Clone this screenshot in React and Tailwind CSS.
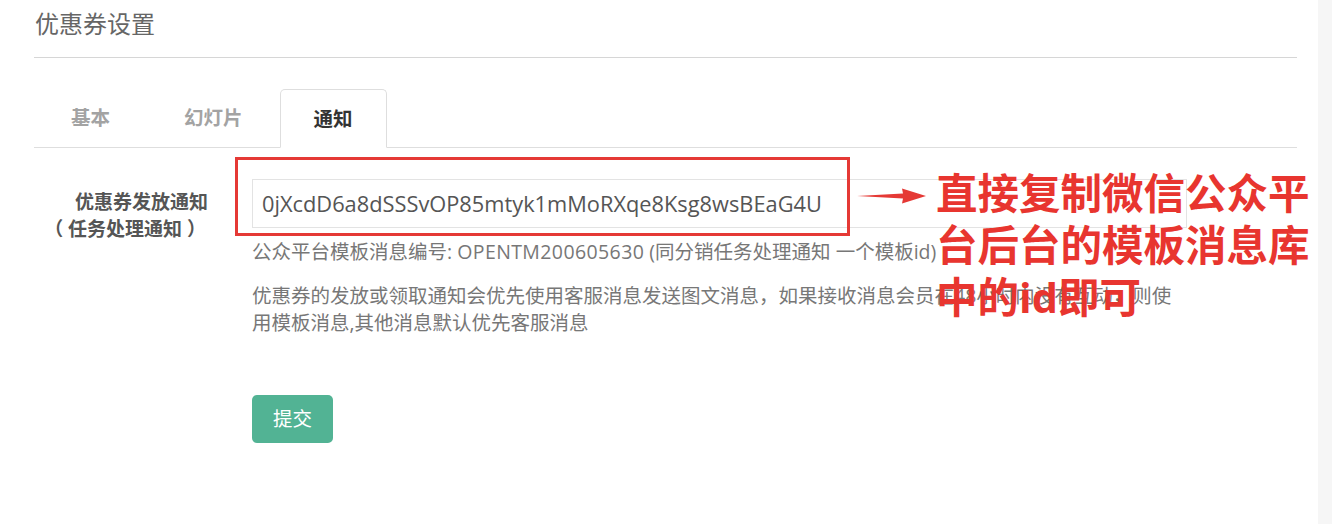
import React from "react";

const font = { fontFamily: '"Open Sans", "Noto Sans CJK SC", sans-serif' };

const tabs = [
  { name: "基本", gap: "mr-[8px]" },
  { name: "幻灯片", gap: "mr-[4px]" },
  { name: "通知", active: true },
];

export default function App() {
  return (
    <div className="relative flex h-[524px] w-full overflow-hidden bg-white" style={font}>
      <div className="w-[1318px] shrink-0 pl-[34px] pr-[21px]">
        <h1 className="pt-[7px] pl-px text-[24px] leading-[33px] text-[#666]">优惠券设置</h1>
        <div className="mt-[17px] border-t border-[#d6d6d6]" />

        {/* tabs */}
        <div className="mt-[31px] flex border-b border-[#dedede] pl-[4px]">
          {tabs.map((t) => (
            <div
              key={t.name}
              className={
                t.active
                  ? "-mb-px flex h-[59px] items-center rounded-t-[5px] border border-b-white border-[#dedede] bg-white px-[33px] text-[19.5px] font-bold text-[#333]"
                  : `flex h-[58px] items-center px-[33px] text-[19.5px] font-bold text-[#a3a3a3] ${t.gap}`
              }
            >
              {t.name}
            </div>
          ))}
        </div>

        {/* form */}
        <div className="flex pt-[31px]">
          <div className="w-[174px] shrink-0 pt-[10px] text-right text-[19px] font-bold leading-[27px] text-[#555]">
            <div>优惠券发放通知</div>
            <div className="mr-[2px]">（ 任务处理通知 ）</div>
          </div>
          <div className="ml-[44px] w-[935px]">
            <input
              type="text"
              readOnly
              value="0jXcdD6a8dSSSvOP85mtyk1mMoRXqe8Ksg8wsBEaG4U"
              className="block h-[49px] w-full border border-[#e3e3e3] px-[9px] text-[21.8px] text-[#555] outline-none"
              style={font}
            />
            <p className="mt-[10px] whitespace-nowrap text-[19.5px] leading-[27px] text-[#777]">
              公众平台模板消息编号: <span className="tracking-[0.4px]">OPENTM200605630</span> (同分销任务处理通知 一个模板id)
            </p>
            <p className="mt-[17px] whitespace-nowrap text-[19.5px] leading-[27px] text-[#777]">
              优惠券的发放或领取通知会优先使用客服消息发送图文消息，如果接收消息会员在48小时内没有互动，则使
              <br />
              用模板消息,其他消息默认优先客服消息
            </p>
            <button className="mt-[59px] h-[48px] w-[81px] rounded-[5px] bg-[#52b394] text-[19.5px] text-white">
              提交
            </button>
          </div>
        </div>
      </div>
      <div className="flex-1 bg-[#f6f6f6]" />

      {/* annotation overlay */}
      <div className="pointer-events-none absolute left-[235px] top-[157px] h-[79px] w-[615px] border-[3px] border-[#e53935]" />
      <svg className="absolute left-[855px] top-[186px]" width="72" height="20" viewBox="0 0 72 20">
        <path d="M2 10 L48 7.6 L47 2.5 L71 10 L47 17.5 L48 12.4 Z" fill="#e53935" />
      </svg>
      <div className="absolute left-[936px] top-[167px] text-[41.5px] font-bold leading-[52px] text-[#e8352f]">
        <div className="whitespace-nowrap">直接复制微信公众平</div>
        <div className="whitespace-nowrap">台后台的模板消息库</div>
        <div className="whitespace-nowrap">中的id即可</div>
      </div>
    </div>
  );
}
